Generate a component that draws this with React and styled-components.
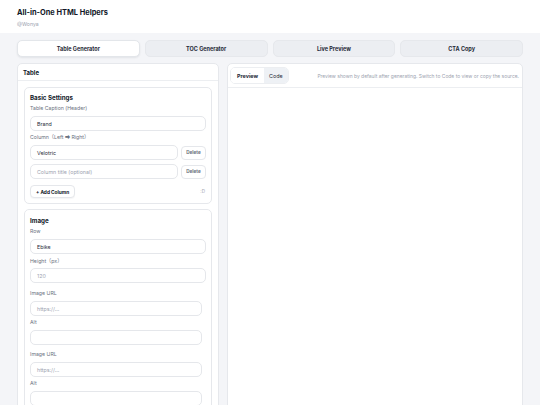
import React from "react";
import styled, { createGlobalStyle } from "styled-components";

const GlobalStyle = createGlobalStyle`
  html, body { margin: 0; padding: 0; }
  body {
    background: #f4f5f8;
    font-family: Inter, "Noto Sans", "Noto Sans CJK JP", sans-serif;
    color: #111827;
    height: 405px;
    overflow: hidden;
  }
  * { box-sizing: border-box; }
`;

const Header = styled.header`
  background: #ffffff;
  height: 33px;
  padding: 8px 17px 0;
`;

const Title = styled.h1`
  margin: 0;
  font-size: 7.4px;
  line-height: 10px;
  font-weight: 700;
  color: #111827;
`;

const Handle = styled.div`
  margin-top: 3px;
  font-size: 5.2px;
  line-height: 7px;
  color: #9ca3af;
`;

const Main = styled.main`
  padding: 7px 17px 0;
`;

const Tabs = styled.nav`
  display: grid;
  grid-template-columns: repeat(4, 1fr);
  gap: 5px;
`;

const Tab = styled.div`
  height: 17px;
  border-radius: 5px;
  display: flex;
  align-items: center;
  justify-content: center;
  font-size: 5.5px;
  font-weight: 700;
  color: #1f2937;
  background: ${(p) => (p.$active ? "#ffffff" : "#eceef2")};
  border: 1px solid ${(p) => (p.$active ? "#e3e6ea" : "#e6e8ec")};
  box-shadow: ${(p) => (p.$active ? "0 1px 2px rgba(16,24,40,0.08)" : "none")};
`;

const Columns = styled.div`
  display: grid;
  grid-template-columns: 202px 1fr;
  gap: 8px;
  margin-top: 6px;
`;

const Panel = styled.section`
  background: #ffffff;
  border: 1px solid #e6e8ec;
  border-radius: 5px;
  height: 360px;
  overflow: hidden;
`;

const PanelHead = styled.div`
  height: 17px;
  display: flex;
  align-items: center;
  padding: 0 5px;
  border-bottom: 1px solid #eceef1;
  font-size: 6px;
  font-weight: 700;
  color: #111827;
`;

const PanelBody = styled.div`
  padding: 6px 6px;
  display: flex;
  flex-direction: column;
  gap: 5px;
`;

const Card = styled.div`
  border: 1px solid #e6e8ec;
  border-radius: 5px;
  padding: ${(p) => p.$pad || "6px 5px 5px"};
  display: flex;
  flex-direction: column;
  flex-shrink: 0;
`;

const CardTitle = styled.div`
  font-size: 6.2px;
  line-height: 8px;
  font-weight: 700;
  color: #111827;
  margin-bottom: 3px;
`;

const Label = styled.div`
  font-size: 5.2px;
  line-height: 7px;
  color: #6b7280;
  margin: ${(p) => p.$m || "0 0 4px"};
`;

const Input = styled.div`
  height: 15px;
  flex-shrink: 0;
  border: 1px solid #e5e7eb;
  border-radius: 5px;
  display: flex;
  align-items: center;
  padding: 0 6px;
  font-size: 5.3px;
  color: ${(p) => (p.$placeholder ? "#9ca3af" : "#1f2937")};
  background: #fff;
  margin-right: ${(p) => p.$inset || "0"};
`;

const Row = styled.div`
  display: flex;
  gap: 3px;
  align-items: center;
  margin-bottom: ${(p) => p.$mb || "4px"};
  & > ${Input} {
    flex: 1 1 auto;
  }
`;

const SmallButton = styled.div`
  height: 14px;
  width: 25px;
  flex-shrink: 0;
  border: 1px solid #e5e7eb;
  border-radius: 4px;
  display: flex;
  align-items: center;
  justify-content: center;
  font-size: 4.6px;
  font-weight: 700;
  color: #6b7280;
  background: #fff;
`;

const FooterRow = styled.div`
  display: flex;
  align-items: center;
  justify-content: space-between;
  margin-top: 1px;
`;

const AddButton = styled.div`
  height: 13px;
  padding: 0 5px;
  border: 1px solid #e5e7eb;
  border-radius: 4px;
  display: flex;
  align-items: center;
  font-size: 4.8px;
  font-weight: 700;
  color: #111827;
  background: #fff;
  box-shadow: 0 1px 1px rgba(16,24,40,0.04);
`;

const Hint = styled.span`
  font-size: 4.6px;
  color: #9ca3af;
  margin-right: 1px;
`;

const Gap = styled.div`
  height: ${(p) => p.$h}px;
  flex-shrink: 0;
`;

const RightHead = styled.div`
  height: 24px;
  display: flex;
  align-items: center;
  justify-content: space-between;
  padding: 0 3px 0 2px;
  border-bottom: 1px solid #eceef1;
`;

const Segment = styled.div`
  display: flex;
  border: 1px solid #eceef1;
  border-radius: 5px;
  overflow: hidden;
  height: 17px;
`;

const SegButton = styled.div`
  display: flex;
  align-items: center;
  padding: 0 ${(p) => (p.$active ? "6px" : "5px")};
  font-size: 5.4px;
  font-weight: ${(p) => (p.$active ? 700 : 400)};
  color: #1f2937;
  background: ${(p) => (p.$active ? "#ffffff" : "#eef1f5")};
`;

const Desc = styled.div`
  font-size: 4.95px;
  color: #9ca3af;
  white-space: nowrap;
`;

export default function App() {
  return (
    <>
      <GlobalStyle />
      <Header>
        <Title>All-in-One HTML Helpers</Title>
        <Handle>@Wonya</Handle>
      </Header>
      <Main>
        <Tabs>
          <Tab $active>Table Generator</Tab>
          <Tab>TOC Generator</Tab>
          <Tab>Live Preview</Tab>
          <Tab>CTA Copy</Tab>
        </Tabs>
        <Columns>
          <Panel>
            <PanelHead>Table</PanelHead>
            <PanelBody>
              <Card>
                <CardTitle>Basic Settings</CardTitle>
                <Label>Table Caption (Header)</Label>
                <Input>Brand</Input>
                <Label $m="3px 0 4px">Column（Left ➡ Right）</Label>
                <Row>
                  <Input>Velotric</Input>
                  <SmallButton>Delete</SmallButton>
                </Row>
                <Row $mb="5px">
                  <Input $placeholder>Column title (optional)</Input>
                  <SmallButton>Delete</SmallButton>
                </Row>
                <FooterRow>
                  <AddButton>+ Add Column</AddButton>
                  <Hint>:D</Hint>
                </FooterRow>
              </Card>
              <Card $pad="7px 5px 5px">
                <CardTitle>Image</CardTitle>
                <Label>Row</Label>
                <Input>Ebike</Input>
                <Label $m="4px 0 3px">Height（px）</Label>
                <Input $placeholder>120</Input>
                <Gap $h={7} />
                <Label>Image URL</Label>
                <Input $placeholder $inset="4px">https://...</Input>
                <Label $m="3px 0 4px">Alt</Label>
                <Input $inset="4px" />
                <Gap $h={6} />
                <Label>Image URL</Label>
                <Input $placeholder $inset="4px">https://...</Input>
                <Label $m="3px 0 4px">Alt</Label>
                <Input $inset="4px" />
              </Card>
            </PanelBody>
          </Panel>
          <Panel>
            <RightHead>
              <Segment>
                <SegButton $active>Preview</SegButton>
                <SegButton>Code</SegButton>
              </Segment>
              <Desc>
                Preview shown by default after generating. Switch to Code to
                view or copy the source.
              </Desc>
            </RightHead>
          </Panel>
        </Columns>
      </Main>
    </>
  );
}
